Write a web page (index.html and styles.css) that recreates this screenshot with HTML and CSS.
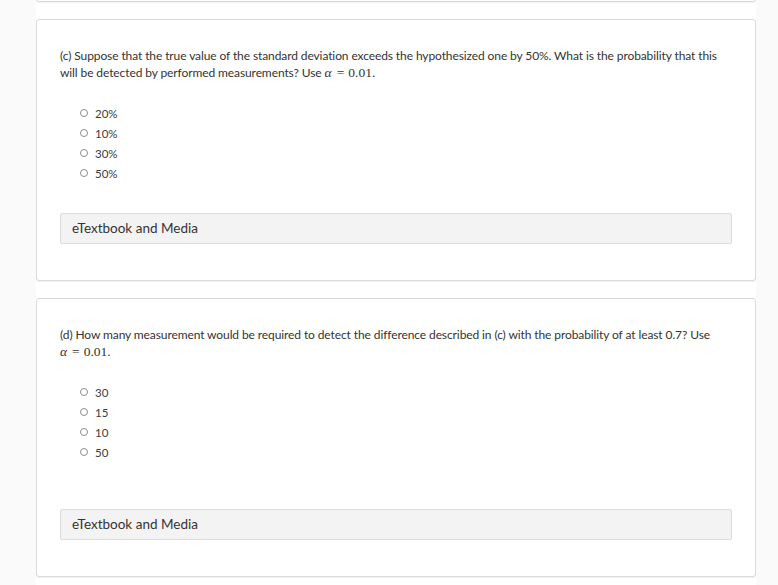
FILE: index.html
```html
<!DOCTYPE html>
<html lang="en">
<head>
<meta charset="utf-8">
<title>Questions</title>
<link rel="stylesheet" href="styles.css">
</head>
<body>
<div class="page">
  <div class="card card--prev"></div>

  <div class="card">
    <p class="question">(c) Suppose that the true value of the standard deviation exceeds the hypothesized one by 50%. What is the probability that this will be detected by performed measurements? Use <span class="math"><i>α</i><span class="op">=</span>0.01.</span></p>
    <ul class="options">
      <li class="option"><span class="radio"></span>20%</li>
      <li class="option"><span class="radio"></span>10%</li>
      <li class="option"><span class="radio"></span>30%</li>
      <li class="option"><span class="radio"></span>50%</li>
    </ul>
    <div class="media">eTextbook and Media</div>
  </div>

  <div class="card">
    <p class="question">(d) How many measurement would be required to detect the difference described in (c) with the probability of at least 0.7? Use <span class="math"><i>α</i><span class="op">=</span>0.01.</span></p>
    <ul class="options options--spaced">
      <li class="option"><span class="radio"></span>30</li>
      <li class="option"><span class="radio"></span>15</li>
      <li class="option"><span class="radio"></span>10</li>
      <li class="option"><span class="radio"></span>50</li>
    </ul>
    <div class="media">eTextbook and Media</div>
  </div>
</div>
</body>
</html>
```
FILE: styles.css
```css
html, body {
  margin: 0;
  padding: 0;
  background: #fafafa;
}

body {
  font-family: Lato, "Open Sans", sans-serif;
  color: #333;
}

.page {
  width: 720px;
  margin-left: 36px;
  background: #fff;
  min-height: 100vh;
  display: flex;
  flex-direction: column;
  gap: 17px;
}

.card {
  border: 1px solid #dadada;
  border-radius: 3px;
  box-shadow: 0 1px 1px rgba(0, 0, 0, 0.06);
  padding: 27px 23px 36px;
  background: #fff;
}

.card--prev {
  margin-top: -30px;
  height: 32px;
  padding: 0;
  box-sizing: border-box;
}

.question {
  margin: 0;
  font-size: 12px;
  line-height: 17px;
  letter-spacing: -0.1px;
  padding-right: 8px;
}

.math {
  font-family: "Liberation Serif", "DejaVu Serif", serif;
  font-size: 13.5px;
  line-height: 17px;
  letter-spacing: 0;
  white-space: nowrap;
}

.math i {
  font-style: italic;
  padding-right: 1px;
}

.op {
  margin: 0 4px 0 4px;
}

.options {
  list-style: none;
  margin: 22px 0 30px;
  padding: 0 0 0 20px;
}

.options--spaced {
  margin-bottom: 47px;
}

.option {
  display: flex;
  align-items: center;
  height: 20px;
  font-size: 11.5px;
  color: #3a3d40;
}

.radio {
  width: 6px;
  height: 6px;
  border: 1px solid #8c8c8c;
  border-radius: 50%;
  margin-right: 7px;
  flex: none;
}

.media {
  height: 29px;
  line-height: 29px;
  border: 1px solid #dcdcdc;
  border-radius: 2px;
  background: #f3f3f3;
  padding: 0 11px;
  font-size: 13.5px;
  color: #333;
}
```
